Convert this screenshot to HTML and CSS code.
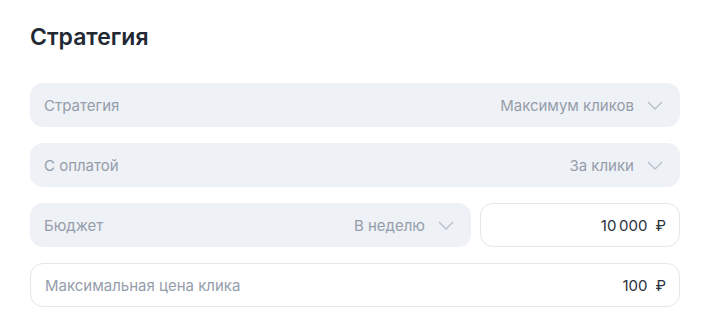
FILE: index.html
```html
<!DOCTYPE html>
<html lang="ru">
<head>
<meta charset="utf-8">
<link rel="stylesheet" href="styles.css">
</head>
<body>
<section class="panel">
  <h2 class="title">Стратегия</h2>
  <div class="rows">
    <div class="field select">
      <span class="label">Стратегия</span>
      <span class="value">Максимум кликов</span>
      <svg class="chev" viewBox="0 0 16 9" width="16" height="9"><path d="M1 1l7 7 7-7" fill="none" stroke="currentColor" stroke-width="1.3"/></svg>
    </div>
    <div class="field select">
      <span class="label">С оплатой</span>
      <span class="value">За клики</span>
      <svg class="chev" viewBox="0 0 16 9" width="16" height="9"><path d="M1 1l7 7 7-7" fill="none" stroke="currentColor" stroke-width="1.3"/></svg>
    </div>
    <div class="split">
      <div class="field select budget">
        <span class="label">Бюджет</span>
        <span class="value">В неделю</span>
        <svg class="chev" viewBox="0 0 16 9" width="16" height="9"><path d="M1 1l7 7 7-7" fill="none" stroke="currentColor" stroke-width="1.3"/></svg>
      </div>
      <div class="field input amount">
        <span class="num">10&#8201;000</span><span class="cur">₽</span>
      </div>
    </div>
    <div class="field input">
      <span class="label">Максимальная цена клика</span>
      <span class="num">100</span><span class="cur">₽</span>
    </div>
  </div>
</section>
</body>
</html>
```
FILE: styles.css
```css
* { box-sizing: border-box; }
html, body { margin: 0; background: #fff; }
body {
  font-family: Inter, "Noto Sans", sans-serif;
  width: 705px;
  height: 330px;
  overflow: hidden;
}
.panel { padding: 22px 25px 0 30px; }
.title {
  margin: 0;
  font-size: 23px;
  font-weight: 600;
  color: #222934;
  line-height: 30px;
}
.rows {
  margin-top: 31px;
  display: flex;
  flex-direction: column;
  gap: 16px;
}
.field {
  height: 44px;
  border-radius: 13px;
  display: flex;
  align-items: center;
  padding: 0 14px;
  font-size: 15px;
  color: #959dab;
}
.select { background: #eef1f6; padding-right: 17px; }
.input { background: #fff; border: 1px solid #e3e6eb; padding-right: 13px; }
.label { flex: 1; }
.value { margin-right: 13px; }
.chev { color: #b8bfca; flex: none; }
.split { display: flex; gap: 9px; }
.budget { flex: 0 0 441px; }
.amount { flex: 1; justify-content: flex-end; }
.num { color: #2a313c; }
.cur { color: #2a313c; margin-left: 8px; }
```
